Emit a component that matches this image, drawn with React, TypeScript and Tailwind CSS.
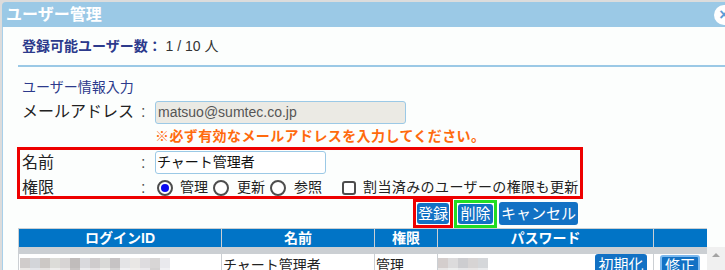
const idBlur = [
  ["#d0cccb", "#d3d5d9", "#ccc8c5", "#dcdcd8", "#d7d4d4", "#c0bcbb", "#d9d9dd", "#cfcccd", "#d9d9d7", "#c6c3c4", "#e4e4e6", "#e9e7e5", "#dedcdf", "#d8d6d6", "#e9e9ed"],
  ["#ebe8e6", "#e4e6ea", "#e6e3e1", "#eeeeec", "#e7e4e4", "#c9c5c4", "#ececef", "#e6e3e4", "#eeeeec", "#d6d4d4", "#f1f1f3", "#f0eeec", "#ebe9ec", "#d4d2d2", "#f1f1f4"],
];

const pwBlur = [
  ["#d4cecd", "#dcdbdc", "#cdcdd0", "#d7d4d4", "#d5d7da"],
  ["#e8e6e6", "#eceded", "#e6e6e8", "#e8e5e5", "#e9eaec"],
];

function Blur({ rows }: { rows: string[][] }) {
  return (
    <div className="flex flex-col">
      {rows.map((row, i) => (
        <div key={i} className="flex">
          {row.map((c, j) => (
            <div key={j} className="w-[10px] h-[10px]" style={{ backgroundColor: c }} />
          ))}
        </div>
      ))}
    </div>
  );
}

function Radio({ checked }: { checked?: boolean }) {
  return (
    <span className="w-[16px] h-[16px] rounded-full border-2 border-[#4d4d4d] bg-white flex items-center justify-center shrink-0">
      {checked && <span className="w-[8px] h-[8px] rounded-full bg-[#0a0af0]" />}
    </span>
  );
}

const btn = "bg-[#1271c4] text-white text-[15px] leading-[23px] rounded-[3px] flex items-center justify-center";

export default function App() {
  return (
    <div className="w-[725px] h-[270px] overflow-hidden bg-[#dcdcdc] pt-[2px] pl-[2px] font-[family-name:'Liberation_Sans','Noto_Sans_CJK_JP',sans-serif]">
      <div className="relative w-[723px]">
        {/* title bar */}
        <div className="h-[25px] bg-[#9bc9e6] rounded-tl-[4px] pl-[4px] flex items-center text-white font-bold text-[16px] leading-[25px]">
          ユーザー管理
        </div>
        <div className="absolute left-[712px] top-[3px] w-[20px] h-[20px] rounded-full bg-white flex items-center justify-center text-[#5b9bd5] text-[16px] font-bold leading-none">
          ×
        </div>

        {/* body */}
        <div className="h-[243px] bg-[#fcfefd] border-l border-[#a8d0ea] pl-[15px] pt-[9px]">
          <div className="h-[20px] leading-[20px] pl-[4px] text-[14px]">
            <span className="font-bold text-[#2c3a8c]">登録可能ユーザー数：</span>
            <span className="text-[#333]"> 1 / 10 人</span>
          </div>
          <div className="mt-[9px] border-t-2 border-[#9bc9e6]" />

          <div className="mt-[10px] h-[20px] leading-[20px] pl-[4px] text-[14px] text-[#2c3a8c]">ユーザー情報入力</div>

          <div className="mt-[3px] h-[24px] flex items-center pl-[4px] text-[16px] text-[#222]">
            <span className="w-[119px]">メールアドレス</span>
            <span className="w-[14px] text-[#555]">:</span>
            <div className="w-[251px] h-[23px] bg-[#ebeae4] border border-[#9bc9e6] rounded-[3px] pl-[2px] flex items-center text-[14px] text-[#555]">
              matsuo@sumtec.co.jp
            </div>
          </div>

          <div className="mt-[2px] h-[20px] leading-[20px] pl-[137px] text-[14px] tracking-[0.4px] font-bold text-[#ff6a0d]">
            ※必ず有効なメールアドレスを入力してください。
          </div>

          {/* highlighted input area */}
          <div className="mt-[1px] -ml-[1px] w-[566px] border-[3px] border-[#ee0000]">
            <div className="h-[25px] flex items-center pl-[2px] text-[16px] text-[#222]">
              <span className="w-[119px]">名前</span>
              <span className="w-[14px] text-[#555]">:</span>
              <div className="w-[171px] h-[23px] bg-white border border-[#9bc9e6] rounded-[3px] pl-[1px] flex items-center text-[14px] text-[#111]">
                チャート管理者
              </div>
            </div>
            <div className="h-[21px] pt-[4px] flex items-center pl-[2px] text-[16px] text-[#222]">
              <span className="w-[119px]">権限</span>
              <span className="w-[14px] text-[#555]">:</span>
              <div className="flex items-center text-[14px] leading-[17px]">
                <span className="ml-[2px]"><Radio checked /></span>
                <span className="ml-[7px]">管理</span>
                <span className="ml-[5px]"><Radio /></span>
                <span className="ml-[8px]">更新</span>
                <span className="ml-[5px]"><Radio /></span>
                <span className="ml-[8px]">参照</span>
                <span className="ml-[20px] w-[14px] h-[14px] border-2 border-[#4d4d4d] rounded-[3px] bg-white" />
                <span className="ml-[7px] tracking-[0.4px]">割当済みのユーザーの権限も更新</span>
              </div>
            </div>
          </div>

          {/* buttons */}
          <div className="w-[566px] -ml-[1px] h-[29px] flex items-center justify-end pr-[5px]">
            <div className="w-[40px] h-[29px] border-[3px] border-[#ee0000] p-px">
              <div className={`${btn} h-full`}>登録</div>
            </div>
            <div className="ml-px w-[43px] h-[28px] border-[3px] border-[#22dd22] p-px">
              <div className={`${btn} h-full`}>削除</div>
            </div>
            <div className={`${btn} ml-[2px] w-[79px] h-[23px]`}>キャンセル</div>
          </div>

          {/* table */}
          <div className="flex">
            <div className="grid grid-cols-[202px_152px_62px_215px_53px] gap-px bg-[#cbcfd3] pl-px pt-px">
              <div className="bg-[#0174c6] h-[18px] leading-[18px] text-center text-white font-bold text-[14px]">ログインID</div>
              <div className="bg-[#0174c6] h-[18px] leading-[18px] text-center text-white font-bold text-[14px]">名前</div>
              <div className="bg-[#0174c6] h-[18px] leading-[18px] text-center text-white font-bold text-[14px]">権限</div>
              <div className="bg-[#0174c6] h-[18px] leading-[18px] text-center text-white font-bold text-[14px]">パスワード</div>
              <div className="bg-[#0174c6] h-[18px]" />

              <div className="bg-white h-[28px] pl-px pt-[4px]">
                <Blur rows={idBlur} />
              </div>
              <div className="bg-white h-[28px] pl-[1px] pt-[2px] text-[14px] leading-[18px] text-[#222]">チャート管理者</div>
              <div className="bg-white h-[28px] pl-[1px] pt-[2px] text-[14px] leading-[18px] text-[#222]">管理</div>
              <div className="bg-white h-[28px] flex justify-between">
                <div className="pt-[4px]">
                  <Blur rows={pwBlur} />
                </div>
                <div className={`${btn} w-[52px] h-[22px] mr-[6px]`}>初期化</div>
              </div>
              <div className="bg-white h-[28px] pl-[6px] pt-px">
                <div className={`${btn} w-[40px] h-[22px] border-2 border-[#7db9ee]`}>修正</div>
              </div>
            </div>
            <div className="mt-[19px] w-[18px] h-[40px] bg-[#f0f0f0] flex justify-center pt-[6px]">
              <div className="w-0 h-0 border-l-[4px] border-r-[4px] border-b-[4px] border-l-transparent border-r-transparent border-b-[#a3a3a3]" />
            </div>
          </div>
        </div>
      </div>
    </div>
  );
}
